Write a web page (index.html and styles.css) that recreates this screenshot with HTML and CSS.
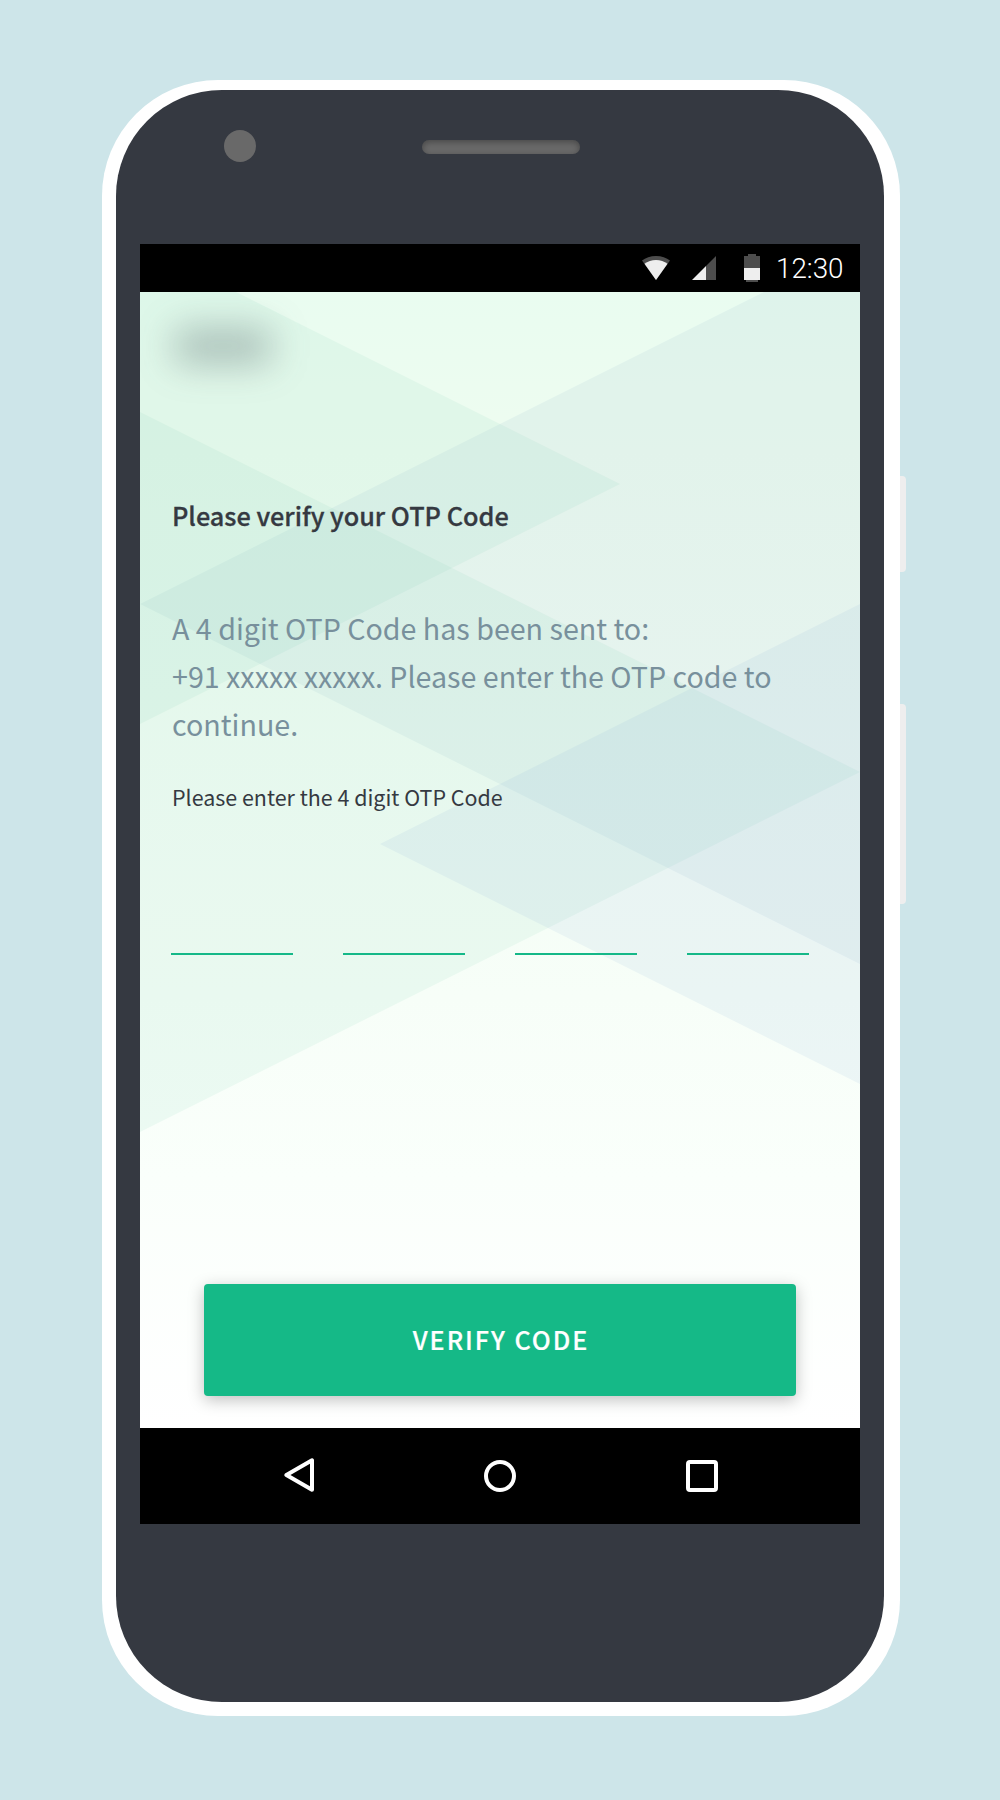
FILE: index.html
```html
<!DOCTYPE html>
<html lang="en">
<head>
<meta charset="utf-8">
<title>Verify OTP</title>
<link rel="stylesheet" href="styles.css">
</head>
<body>
<main class="stage">
  <div class="phone">
    <span class="side-button power"></span>
    <span class="side-button volume"></span>
    <div class="bezel">
      <div class="bezel-top">
        <span class="camera"></span>
        <span class="speaker"></span>
      </div>
      <div class="screen">
        <header class="status-bar">
          <svg class="status-icon" width="28" height="28" viewBox="0 0 28 28">
            <path d="M0 6.6C3.6 3.7 8.4 2 14 2s10.400 1.700 14 4.600L14 26z" fill="#4d4d4d"/>
            <path d="M2.500 9.800C5.600 7.300 9.700 6 14 6s8.400 1.300 11.500 3.800L14 26z" fill="#eee"/>
          </svg>
          <svg class="status-icon signal" width="24" height="28" viewBox="0 0 24 28">
            <path d="M24 2v24H14V12z" fill="#4d4d4d"/>
            <path d="M14 12v14H0z" fill="#eee"/>
          </svg>
          <svg class="status-icon battery" width="16" height="28" viewBox="0 0 16 28">
            <path d="M4 0h8v2h4v12H0V2h4zM2 26h12v2H2z" fill="#4d4d4d"/>
            <path d="M0 14h16v12H0z" fill="#eee"/>
          </svg>
          <time class="clock">12:30</time>
        </header>
        <section class="content">
          <svg class="backdrop" width="720" height="1136" viewBox="0 0 720 1136">
            <path class="tint-blue" d="M0 312L624 0h96v672z"/>
            <path class="tint-green" d="M0 0h96l384 192L0 432z"/>
            <path class="tint-green" d="M0 120l720 360L0 840z"/>
            <path class="tint-sky" d="M720 312L240 552l480 240z"/>
          </svg>
          <div class="logo"></div>
          <h1 class="title">Please verify your OTP Code</h1>
          <p class="message">A 4 digit OTP Code has been sent to:<br>+91 xxxxx xxxxx. Please enter the OTP code to continue.</p>
          <p class="hint">Please enter the 4 digit OTP Code</p>
          <div class="otp"><span></span><span></span><span></span><span></span></div>
          <button class="verify">VERIFY CODE</button>
        </section>
        <nav class="nav-bar">
          <svg width="32" height="36" viewBox="0 0 32 36">
            <path d="M30 2.300v29.400L4.400 17z" fill="none" stroke="#fff" stroke-width="4" stroke-linejoin="round"/>
          </svg>
          <svg width="32" height="36" viewBox="0 0 32 36">
            <circle cx="16" cy="18" r="14" fill="none" stroke="#fff" stroke-width="4"/>
          </svg>
          <svg width="32" height="36" viewBox="0 0 32 36">
            <rect x="2" y="4" width="28" height="28" rx="2" fill="none" stroke="#fff" stroke-width="4"/>
          </svg>
        </nav>
      </div>
    </div>
  </div>
</main>
</body>
</html>
```
FILE: styles.css
```css
* { box-sizing: border-box; }

body {
  margin: 0;
  background: #cde5e9;
  font-family: "Noto Sans CJK JP", "Noto Sans", sans-serif;
}

.stage { height: 1800px; padding: 80px 100px 84px 102px; overflow: hidden; }

.phone {
  position: relative;
  width: 798px;
  height: 1636px;
  padding: 10px 16px 14px 14px;
  border-radius: 116px;
  background: #fff;
}

.side-button {
  position: absolute;
  left: 798px;
  width: 6px;
  border-radius: 0 4px 4px 0;
  background: #eee;
}
.power { top: 396px; height: 96px; }
.volume { top: 624px; height: 200px; }

.bezel {
  height: 1612px;
  padding: 0 24px;
  border-radius: 106px;
  background: #353941;
}

.bezel-top {
  display: flex;
  height: 154px;
  padding: 39.500px 84px 0;
  gap: 166px;
}
.camera { width: 32px; height: 32px; border-radius: 50%; background: #696969; }
.speaker {
  width: 158px;
  height: 14px;
  margin-top: 10.500px;
  border-radius: 7px;
  background: #696969;
  box-shadow: inset 0 2px 6px rgba(0, 0, 0, .32);
}

.screen { display: flex; flex-direction: column; width: 720px; height: 1280px; }

.status-bar {
  display: flex;
  align-items: center;
  height: 48px;
  padding: 0 12px 0 502px;
  background: #000;
}
.status-icon { flex: none; }
.signal { margin-left: 22px; }
.battery { margin-left: 28px; }
.clock {
  margin-left: 16px;
  padding-top: 2px;
  color: #fff;
  font: 300 27.800px/48px Roboto, sans-serif;
}

.content {
  position: relative;
  display: flex;
  flex-direction: column;
  height: 1136px;
  padding: 36px 32px 32px;
  overflow: hidden;
  background: linear-gradient(#e9fcf0 0%, #eefcf0 14%, #f7fef8 62%, #fafffb 78%, #fff 100%);
}
.backdrop { position: absolute; left: 0; top: 0; }
.tint-blue { fill: rgba(130, 165, 195, .1); }
.tint-sky { fill: rgba(125, 165, 215, .1); }
.tint-green { fill: rgba(115, 208, 178, .1); }
.content > :not(.backdrop) { position: relative; }

.logo {
  width: 98px;
  height: 36px;
  margin-left: 2px;
  border-radius: 12px;
  background: rgba(60, 80, 85, .33);
  filter: blur(18px);
}

.title {
  margin: 127px 0 0;
  color: #353941;
  font-size: 25.250px;
  font-weight: 500;
  line-height: 48px;
  -webkit-text-stroke: .3px #353941;
}
.message {
  margin: 64.500px 0 0;
  color: #78909c;
  font-size: 28.650px;
  line-height: 48px;
}
.hint {
  margin: 25.500px 0 0;
  color: #353941;
  font-size: 21.450px;
  line-height: 48px;
}

.otp { display: flex; gap: 50px; margin: 132px 0 0 -1px; }
.otp span { width: 122px; height: 2px; background: #15b888; }

.verify {
  width: 592px;
  height: 112px;
  margin: auto 0 0 32px;
  padding: 0 0 2px 2px;
  border: 0;
  border-radius: 4px;
  background: #15b987;
  box-shadow: 0 4px 16px rgba(0, 0, 0, .25);
  color: #fff;
  font-family: inherit;
  font-size: 25.100px;
  font-weight: 500;
  letter-spacing: 2px;
  -webkit-text-stroke: .2px #fff;
}

.nav-bar {
  display: flex;
  justify-content: space-between;
  align-items: center;
  height: 96px;
  padding: 0 142px;
  background: #000;
}
```
